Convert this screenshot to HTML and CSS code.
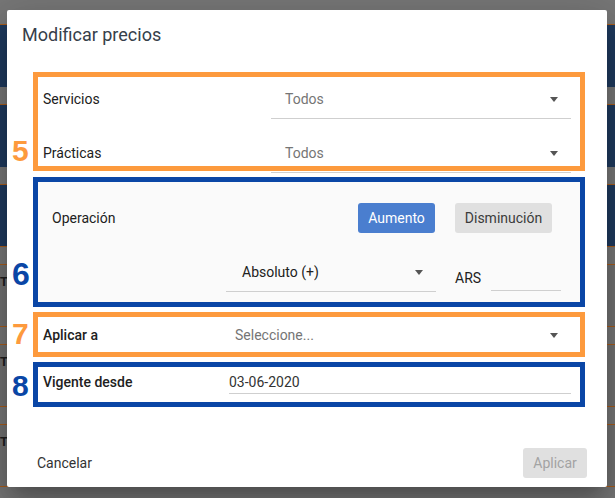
FILE: index.html
```html
<!DOCTYPE html>
<html lang="es">
<head>
<meta charset="utf-8">
<title>Modificar precios</title>
<link rel="stylesheet" href="styles.css">
</head>
<body>
  <div class="backdrop">
    <div class="card card-blue"></div>
    <div class="card card-blue"></div>
    <div class="card card-blue card-closed"></div>
    <div class="card card-gray"><span class="tag">T</span></div>
    <div class="card card-gray"><span class="tag">T</span></div>
    <div class="card card-gray"><span class="tag">T</span></div>
  </div>

  <div class="dialog">
    <h2 class="dialog-title">Modificar precios</h2>

    <div class="dialog-body">
      <div class="box box-orange box-filters">
        <span class="num num-orange num-5">5</span>
        <div class="filter-row">
          <div class="filter-label">Servicios</div>
          <div class="select">Todos<span class="caret"></span></div>
        </div>
        <div class="filter-row">
          <div class="filter-label">Prácticas</div>
          <div class="select">Todos<span class="caret"></span></div>
        </div>
      </div>

      <div class="box box-blue box-operation">
        <span class="num num-blue num-6">6</span>
        <div class="op-row">
          <div class="op-label">Operación</div>
          <button class="btn btn-primary" type="button">Aumento</button>
          <button class="btn btn-muted" type="button">Disminución</button>
        </div>
        <div class="op-row2">
          <div class="select select-wide">Absoluto (+)<span class="caret"></span></div>
          <div class="ars">ARS</div>
          <div class="amount"></div>
        </div>
      </div>

      <div class="box box-orange box-apply">
        <span class="num num-orange num-7">7</span>
        <div class="strong-label apply-label">Aplicar a</div>
        <div class="select-plain">Seleccione...<span class="caret caret-plain"></span></div>
      </div>

      <div class="box box-blue box-date">
        <span class="num num-blue num-8">8</span>
        <div class="strong-label date-label">Vigente desde</div>
        <div class="date-field">03-06-2020</div>
      </div>
    </div>

    <div class="dialog-actions">
      <button class="cancel" type="button">Cancelar</button>
      <button class="btn btn-disabled" type="button">Aplicar</button>
    </div>
  </div>
</body>
</html>
```

FILE: styles.css
```css
* { box-sizing: border-box; }

html, body {
  margin: 0;
  padding: 0;
}

body {
  width: 615px;
  height: 498px;
  overflow: hidden;
  position: relative;
  background: #777777;
  font-family: Roboto, "Noto Sans", Arial, sans-serif;
}

/* page behind the overlay */
.backdrop {
  display: flex;
  flex-direction: column;
  gap: 17px;
  padding-top: 24px;
}

.card {
  height: 63px;
  border-top: 1px solid #a75c1c;
}

.card-blue { background: #1f3a5e; }
.card-closed { border-bottom: 1px solid #a75c1c; }

.card-gray {
  background: #727272;
  border-bottom: 1px solid #a75c1c;
  padding-top: 9px;
  font: bold 13px "Liberation Sans", Arial, sans-serif;
  color: #1e1e1e;
}

.tag { display: inline-block; margin-left: 0; }

/* dialog */
.dialog {
  position: absolute;
  left: 7px;
  top: 10px;
  width: 600px;
  height: 477px;
  background: #ffffff;
  border-radius: 2px;
  display: flex;
  flex-direction: column;
  box-shadow: 0 11px 15px -7px rgba(0,0,0,.2), 0 24px 38px 3px rgba(0,0,0,.14), 0 9px 46px 8px rgba(0,0,0,.12);
}

.dialog-title {
  margin: 0;
  height: 62px;
  padding: 13px 15px 0;
  font-size: 18px;
  line-height: 24px;
  font-weight: 400;
  color: #36404a;
}

.dialog-body {
  display: flex;
  flex-direction: column;
  padding: 0 22px 0 26px;
}

.box {
  position: relative;
  border: 5px solid;
}

.box-orange { border-color: #fd9a3d; }
.box-blue { border-color: #0a46a6; }

.num {
  position: absolute;
  left: -26px;
  font: bold 30px/30px "Liberation Sans", Arial, sans-serif;
}

.num-orange { color: #fd9a3d; }
.num-blue { color: #0a46a6; }
.num-5 { top: 59px; }
.num-6 { top: 77px; font-size: 32px; }
.num-7 { top: 2px; }
.num-8 { top: 4px; }

/* 5: filters */
.box-filters { height: 99px; }

.filter-row {
  display: flex;
  align-items: flex-start;
  height: 54px;
  padding-left: 5px;
}

.filter-label {
  width: 228px;
  margin-top: 12px;
  font-size: 14px;
  line-height: 20px;
  color: #212121;
}

.select {
  position: relative;
  width: 300px;
  height: 40px;
  margin-top: 2px;
  padding: 10px 0 0 14px;
  border-bottom: 1px solid #cfcfcf;
  font-size: 14px;
  line-height: 20px;
  color: #757575;
}

.caret {
  position: absolute;
  right: 13px;
  top: 18px;
  width: 0;
  height: 0;
  border-left: 4.5px solid transparent;
  border-right: 4.5px solid transparent;
  border-top: 5px solid #555555;
}

/* 6: operation */
.box-operation {
  height: 130px;
  margin-top: 6px;
  background: #fafafa;
}

.op-row {
  display: flex;
  align-items: center;
  height: 51px;
  padding: 21px 0 0 14px;
}

.op-label {
  width: 306px;
  font-size: 14px;
  line-height: 20px;
  color: #212121;
}

.btn {
  height: 30px;
  padding: 0;
  border: 0;
  border-radius: 3px;
  font-family: Roboto, "Noto Sans", Arial, sans-serif;
  font-size: 14px;
}

.btn-primary {
  width: 77px;
  background: #4a7ecf;
  color: #ffffff;
}

.btn-muted {
  width: 97px;
  margin-left: 20px;
  background: #e0e0e0;
  color: #3b3b3b;
}

.op-row2 {
  display: flex;
  align-items: flex-end;
  height: 59px;
  padding-left: 188px;
}

.select-wide {
  width: 210px;
  padding-left: 16px;
  color: #212121;
}

.ars {
  margin: 0 0 4px 19px;
  font-size: 14px;
  line-height: 20px;
  color: #212121;
}

.amount {
  width: 70px;
  height: 30px;
  margin: 0 0 1px 10px;
  border-bottom: 1px solid #cfcfcf;
}

/* 7: apply to */
.box-apply {
  height: 45px;
  margin-top: 5px;
  display: flex;
  align-items: center;
  padding-left: 5px;
}

.strong-label {
  font-size: 14px;
  line-height: 20px;
  font-weight: 500;
  color: #212121;
}

.apply-label { width: 192px; }

.select-plain {
  position: relative;
  width: 336px;
  font-size: 14px;
  line-height: 20px;
  color: #757575;
}

.caret-plain { top: 8px; }

/* 8: valid from */
.box-date {
  height: 45px;
  margin-top: 5px;
  display: flex;
  align-items: flex-start;
  padding-left: 5px;
}

.date-label {
  width: 186px;
  margin-top: 5px;
}

.date-field {
  width: 342px;
  margin-top: 5px;
  padding-bottom: 1px;
  border-bottom: 1px solid #cfcfcf;
  font-size: 14px;
  line-height: 20px;
  color: #333333;
}

/* actions */
.dialog-actions {
  margin-top: auto;
  display: flex;
  justify-content: space-between;
  align-items: center;
  padding: 0 20px 9px 30px;
}

.cancel {
  padding: 0;
  border: 0;
  background: none;
  font-family: Roboto, "Noto Sans", Arial, sans-serif;
  font-size: 14px;
  color: #333333;
}

.btn-disabled {
  width: 64px;
  background: #e0e0e0;
  color: #a3a3a3;
}
```
